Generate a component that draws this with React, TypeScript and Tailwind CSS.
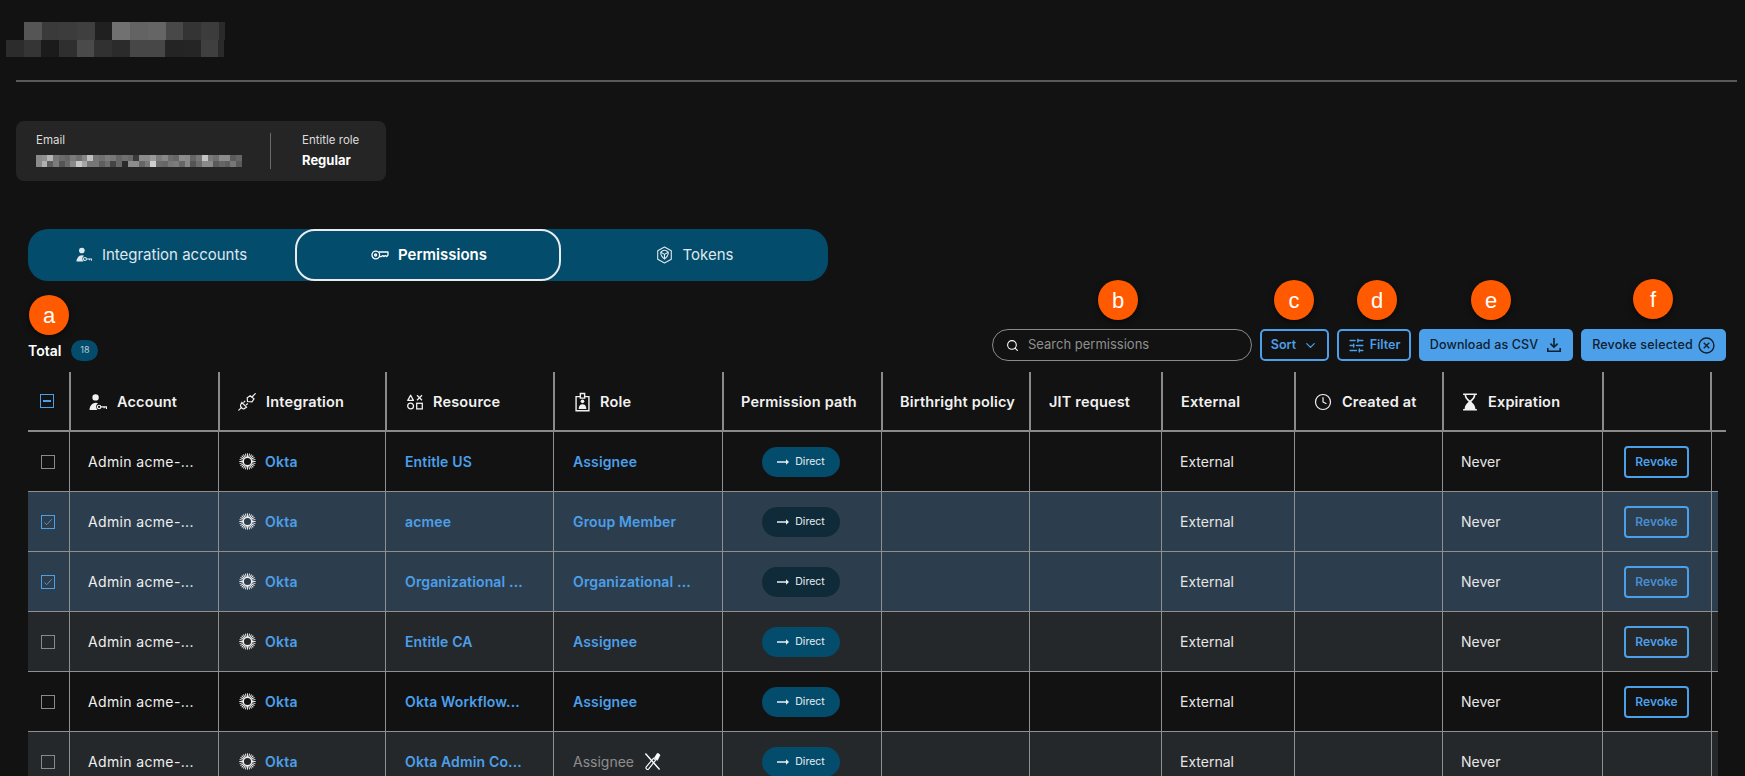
import { ChevronDown, Clock, Search, SlidersHorizontal } from "lucide-react";

const gridCols =
  "grid grid-cols-[41px_149px_167px_168px_169px_159px_148px_132px_133px_148px_160px_110px]";

const blurTop = ["#555", "#3a3a3a", "#3c3c3c", "#3f3f3f", "#202020", "#717171", "#636363", "#656565", "#484848", "#343434", "#3c3c3c"];
const blurBottom = ["#2c2c2c", "#353535", "#1b1b1b", "#2f2f2f", "#4a4a4a", "#313131", "#2b2b2b", "#474747", "#474747", "#242424", "#252525", "#3f3f3f"];
const emailTop = ["#8a8a8a", "#8f8f8f", "#b5b5b5", "#777", "#6c6c6c", "#666", "#7a7a7a", "#6e6e6e", "#858585", "#c0c0c0", "#777", "#707070", "#7c7c7c", "#777", "#666", "#707070", "#6a6a6a", "#3a3a3a", "#8c8c8c", "#8c8c8c", "#9a9a9a", "#7c7c7c", "#888", "#6d6d6d", "#666", "#8d8d8d", "#8a8a8a", "#666", "#777", "#c4c4c4", "#7a7a7a", "#707070", "#8c8c8c", "#8c8c8c", "#5c5c5c", "#666"];
const emailBottom = ["#8a8a8a", "#b0b0b0", "#5e5e5e", "#7c7c7c", "#555", "#6a6a6a", "#8a8a8a", "#c8c8c8", "#a5a5a5", "#777", "#777", "#5e5e5e", "#6e6e6e", "#444", "#666", "#2a2a2a", "#8c8c8c", "#8c8c8c", "#666", "#7a7a7a", "#cfcfcf", "#6a6a6a", "#666", "#777", "#7c7c7c", "#666", "#888", "#555", "#6c6c6c", "#8a8a8a", "#8a8a8a", "#5a5a5a", "#666", "#5e5e5e", "#777", "#5a5a5a"];

function AccountIcon({ className }: { className?: string }) {
  return (
    <svg viewBox="0 0 17 16" className={className} fill="currentColor">
      <circle cx="6.2" cy="3.2" r="3" />
      <path d="M0.5 15c0-3 2-6.8 6-6.8 .8 0 1.5 .2 2.1 .5-1.4 .8-2.2 2.5-1.7 4.2 .2 .7 .5 1.3 1 2.1z" />
      <circle cx="9.5" cy="12.2" r="1.6" fill="none" stroke="currentColor" strokeWidth="1.1" />
      <path d="M11 12.2h5.5v2M14.3 12.2v1.3" fill="none" stroke="currentColor" strokeWidth="1.1" />
    </svg>
  );
}

function KeyIcon({ className }: { className?: string }) {
  return (
    <svg viewBox="0 0 18 12" className={className} fill="none" stroke="currentColor" strokeWidth="1.3">
      <circle cx="4.8" cy="6" r="3.8" />
      <circle cx="4.6" cy="6" r="1" />
      <path d="M8 3h9v3l-1.4 1.6-1.3-1-1.3 1-1.2-1-1.3 1H8.2" strokeLinejoin="round" />
    </svg>
  );
}

function TokenIcon({ className }: { className?: string }) {
  return (
    <svg viewBox="0 0 17 18" className={className} fill="none" stroke="currentColor" strokeWidth="1.1" strokeLinejoin="round">
      <path d="M8.5 1l6.8 3.8v8.4L8.5 17l-6.8-3.8V4.8z" />
      <path d="M4.8 6.2c1.1-1.3 2.3-2 3.7-2s2.6 .7 3.7 2c.2 2.6-1.1 5-3.7 6.9-2.6-1.9-3.9-4.3-3.7-6.9z" />
      <path d="M4.8 6.2L8.5 8.4l3.7-2.2M8.5 8.4v4.7" />
    </svg>
  );
}

function PlugIcon({ className }: { className?: string }) {
  return (
    <svg viewBox="0 0 18 18" className={className} fill="none" stroke="currentColor" strokeWidth="1.2">
      <path d="M0.8 17.2l3-3M14 4l3.3-3.3" strokeLinecap="round" />
      <path d="M3.8 9.5l4.7 4.7-2.2 1.4c-1 .4-2.2 0-3-.9-.8-.8-1-1.8-.7-2.8z" />
      <path d="M5.5 9.6l1.7-1.7M8 12.2l1.7-1.7" />
      <path d="M9.5 8.5l-.3-3.8 3-2 3.8 3.2-2 3z" />
    </svg>
  );
}

function ShapesIcon({ className }: { className?: string }) {
  return (
    <svg viewBox="0 0 16 16" className={className} fill="none" stroke="currentColor" strokeWidth="1.3">
      <path d="M3.6 1.2L6.4 6.4H0.8z" strokeLinejoin="round" />
      <path d="M10 1.2l5 5M15 1.2l-5 5" />
      <circle cx="3.6" cy="12" r="2.9" />
      <rect x="9.7" y="9.3" width="5.6" height="5.6" />
    </svg>
  );
}

function RoleIcon({ className }: { className?: string }) {
  return (
    <svg viewBox="0 0 14 18" className={className} fill="none" stroke="currentColor" strokeWidth="1.3">
      <path d="M5 4H1v13.2h12V4H9" />
      <path d="M5 5.4V1h4v4.4z" />
      <circle cx="7" cy="8.4" r="1.7" fill="currentColor" stroke="none" />
      <path d="M3.4 15.6c0-2.6 1.4-4.4 3.6-4.4s3.6 1.8 3.6 4.4z" fill="currentColor" stroke="none" />
    </svg>
  );
}

function HourglassIcon({ className }: { className?: string }) {
  return (
    <svg viewBox="0 0 14 17" className={className} fill="currentColor">
      <path d="M0.5 0.5h13v1.4h-1.4c0 2.6-2 4.5-3.8 6.4 1.8 1.6 3.8 3.8 3.8 6.8h1.4v1.4H0.5v-1.4h1.4c0-3 2-5.2 3.8-6.8C3.9 6.4 1.9 4.5 1.9 1.9H0.5zM3.4 1.9c.1 2 1.8 3.6 3.6 5.3 1.8-1.7 3.5-3.3 3.6-5.3z" />
    </svg>
  );
}

function OktaIcon() {
  const rays = Array.from({ length: 24 }, (_, i) => i * 15);
  return (
    <svg viewBox="0 0 17 17" className="w-[17px] h-[17px] shrink-0 text-[#eeeeee]" stroke="currentColor" fill="none">
      {rays.map((deg) => (
        <line key={deg} x1="8.5" y1="0.3" x2="8.5" y2="4" strokeWidth="0.95" transform={`rotate(${deg} 8.5 8.5)`} />
      ))}
      <circle cx="8.5" cy="8.5" r="4.2" strokeWidth="1.3" />
    </svg>
  );
}

function ToolsOffIcon() {
  return (
    <svg viewBox="0 0 18 20" className="w-[17px] h-[19px] text-white" fill="none" stroke="currentColor">
      <path d="M1.5 1.5L16.5 18.5" strokeWidth="1.5" />
      <path d="M3 18.2c-1-.8-1.2-1.5-.8-2.2L10 6.5l2.4 2L5 17.8c-.6 .7-1.2 .9-2 .4z" strokeWidth="1.2" />
      <path d="M11 6.4L14 1.5c1-.4 2.4 .5 2.8 1.8l-2.6 5.4z" fill="currentColor" strokeWidth="0.8" />
    </svg>
  );
}

function DownloadIcon() {
  return (
    <svg viewBox="0 0 16 16" className="w-4 h-4" fill="none" stroke="currentColor" strokeWidth="1.6">
      <path d="M8 1v9M4.4 6.6L8 10.2l3.6-3.6" />
      <path d="M1.8 11v3.2h12.4V11" />
    </svg>
  );
}

function Marker({ letter, className }: { letter: string; className: string }) {
  return (
    <div
      className={`absolute w-10 h-10 rounded-full bg-[#ff5a00] text-white text-[22px] flex items-center justify-center shadow-[0_2px_6px_rgba(0,0,0,0.5)] font-['Liberation_Sans',sans-serif] ${className}`}
    >
      {letter}
    </div>
  );
}

function HeadCell({ icon, label, className = "pl-[18px]" }: { icon?: React.ReactNode; label: string; className?: string }) {
  return (
    <div className={`border-l-2 border-[#8a8a8a] pt-[2px] flex items-center gap-[10px] text-[14.5px] tracking-[0.012em] font-semibold text-[#f1f1f1] whitespace-nowrap ${className}`}>
      {icon}
      {label}
    </div>
  );
}

function Checkbox({ state }: { state: "off" | "on" }) {
  if (state === "on") {
    return (
      <div className="w-[14px] h-[14px] border border-[#4c9fe9] flex items-center justify-center">
        <svg viewBox="0 0 10 10" className="w-[10px] h-[10px] text-[#4c9fe9]" fill="none" stroke="currentColor" strokeWidth="0.9">
          <path d="M1.5 5.5l2.2 2.2 5-5.4" />
        </svg>
      </div>
    );
  }
  return <div className="w-[14px] h-[14px] border border-[#8a8a8a]" />;
}

type Row = {
  resource: string;
  role: string;
  bg: string;
  pill: string;
  selected?: boolean;
  noRevoke?: boolean;
  inherited?: boolean;
};

const rows: Row[] = [
  { resource: "Entitle US", role: "Assignee", bg: "bg-[#121212]", pill: "bg-[#044c6c]" },
  { resource: "acmee", role: "Group Member", bg: "bg-[#2c3e4e]", pill: "bg-[#0f2a38]", selected: true },
  { resource: "Organizational ...", role: "Organizational ...", bg: "bg-[#2c3e4e]", pill: "bg-[#0f2a38]", selected: true },
  { resource: "Entitle CA", role: "Assignee", bg: "bg-[#25282b]", pill: "bg-[#044c6c]" },
  { resource: "Okta Workflow...", role: "Assignee", bg: "bg-[#121212]", pill: "bg-[#044c6c]" },
  { resource: "Okta Admin Co...", role: "Assignee", bg: "bg-[#25282b]", pill: "bg-[#044c6c]", noRevoke: true, inherited: true },
];

const cellLine = "border-l border-[#8f8f8f]";

export default function App() {
  return (
    <div className="relative h-[776px] overflow-hidden bg-[#121212] text-white font-['Inter',sans-serif]">
      {/* blurred page title */}
      <div className="pl-[6px] pt-[22px] h-[80px]">
        <div className="flex h-[18px] pl-[18px]">
          {blurTop.map((c, i) => (
            <div key={i} className="w-[17.7px]" style={{ backgroundColor: c }} />
          ))}
          <div className="w-[6px] bg-[#2a2a2a]" />
        </div>
        <div className="flex h-[17px]">
          {blurBottom.map((c, i) => (
            <div key={i} className="w-[17.7px]" style={{ backgroundColor: c }} />
          ))}
          <div className="w-[6px] bg-[#2a2a2a]" />
        </div>
      </div>
      <div className="ml-4 mr-2 h-[2px] bg-[#5a5a5a]" />

      <div className="ml-4 mt-[39px] w-[370px] h-[60px] rounded-lg bg-[#252525] flex items-start pt-[11px]">
        <div className="w-[254px] pl-5 flex flex-col">
          <span className="text-[11.5px] text-[#dcdcdc] leading-[16px]">Email</span>
          <div className="w-[206px] mt-[7px]">
            <div className="flex h-[6px]">
              {emailTop.map((c, i) => (
                <div key={i} className="flex-1" style={{ backgroundColor: c }} />
              ))}
            </div>
            <div className="flex h-[6px]">
              {emailBottom.map((c, i) => (
                <div key={i} className="flex-1" style={{ backgroundColor: c }} />
              ))}
            </div>
          </div>
        </div>
        <div className="w-px h-9 mt-px bg-[#6a6a6a]" />
        <div className="pl-[31px] flex flex-col">
          <span className="text-[11.5px] text-[#dcdcdc] leading-[16px]">Entitle role</span>
          <span className="text-[13px] font-bold leading-[16px] mt-1">Regular</span>
        </div>
      </div>

      <div className="ml-7 mt-12 w-[800px] h-[52px] rounded-[20px] bg-[#044c6c] flex">
        <div className="w-[267px] flex items-center justify-center gap-[10px] text-[15px] text-[#dfe8ec]">
          <AccountIcon className="w-4 h-4" />
          Integration accounts
        </div>
        <div className="w-[266px] rounded-[20px] border-2 border-[#e9ecee] flex items-center justify-center gap-[9px] text-[15px] font-semibold pl-[2px]">
          <KeyIcon className="w-[18px] h-3" />
          Permissions
        </div>
        <div className="flex-1 flex items-center justify-center gap-[10px] text-[15px] text-[#dfe8ec]">
          <TokenIcon className="w-[17px] h-[18px]" />
          Tokens
        </div>
      </div>

      <div className="ml-7 mr-[19px] mt-12 h-[32px] flex items-center">
        <div className="flex items-center gap-[10px] mt-[10px]">
          <span className="text-[14px] font-semibold">Total</span>
          <span className="w-[27px] h-[21px] rounded-full bg-[#044c6c] text-[#b9cdd8] text-[9px] flex items-center justify-center">18</span>
        </div>
        <div className="ml-auto flex items-center gap-2">
          <div className="w-[260px] h-8 rounded-full border border-[#8a8a8a] flex items-center pl-[13px] gap-[9px] text-[13px] text-[#8f8f8f]">
            <Search className="w-[13px] h-[13px] text-white" strokeWidth={2} />
            Search permissions
          </div>
          <button className="w-[69px] h-8 rounded-[5px] border-2 border-[#4c9fe9] text-[#4c9fe9] text-[12.5px] font-semibold flex items-center justify-center gap-[7px]">
            Sort
            <ChevronDown className="w-[15px] h-[15px]" />
          </button>
          <button className="w-[74px] h-8 rounded-[5px] border-2 border-[#4c9fe9] text-[#4c9fe9] text-[12.5px] font-semibold flex items-center justify-center gap-[5px]">
            <SlidersHorizontal className="w-[17px] h-[17px]" />
            Filter
          </button>
          <button className="w-[154px] h-8 rounded-[5px] bg-[#4c9fe9] text-[#10202e] text-[12.5px] tracking-[0.01em] font-medium flex items-center justify-center gap-2">
            Download as CSV
            <DownloadIcon />
          </button>
          <button className="w-[145px] h-8 rounded-[5px] bg-[#4c9fe9] text-[#10202e] text-[12.5px] tracking-[0.015em] font-medium flex items-center justify-center gap-[5px]">
            Revoke selected
            <svg viewBox="0 0 16 16" className="w-[17px] h-[17px]" fill="none" stroke="currentColor" strokeWidth="1.3">
              <circle cx="8" cy="8" r="7" />
              <path d="M5.4 5.4l5.2 5.2M10.6 5.4l-5.2 5.2" />
            </svg>
          </button>
        </div>
      </div>

      <div className="ml-7 mt-[11px]">
        <div className={`${gridCols} w-[1698px] h-[60px] border-b-2 border-[#8a8a8a]`}>
          <div className="flex items-center pl-3">
            <div className="w-[14px] h-[14px] border border-[#4c9fe9] flex items-center justify-center">
              <div className="w-2 h-[2px] bg-[#4c9fe9]" />
            </div>
          </div>
          <HeadCell icon={<AccountIcon className="w-[18px] h-[17px]" />} label="Account" />
          <HeadCell icon={<PlugIcon className="w-[18px] h-[18px]" />} label="Integration" className="pl-[18px] gap-[9px]" />
          <HeadCell icon={<ShapesIcon className="w-4 h-4 ml-[2px]" />} label="Resource" />
          <HeadCell icon={<RoleIcon className="w-[15px] h-[20px] ml-[2px]" />} label="Role" />
          <HeadCell label="Permission path" className="justify-center pr-[7px]" />
          <HeadCell label="Birthright policy" className="justify-center pl-[3px]" />
          <HeadCell label="JIT request" />
          <HeadCell label="External" />
          <HeadCell icon={<Clock className="w-[18px] h-[18px]" strokeWidth={1.6} />} label="Created at" />
          <HeadCell icon={<HourglassIcon className="w-4 h-[18px]" />} label="Expiration" />
          <div className="border-l-2 border-r-2 border-[#8a8a8a]" />
        </div>

        {rows.map((row, i) => (
          <div key={i} className={`${gridCols} ${row.bg} w-[1690px] h-[60px] border-b border-[#8f8f8f]`}>
            <div className="flex items-center pl-[13px]">
              <Checkbox state={row.selected ? "on" : "off"} />
            </div>
            <div className={`${cellLine} flex items-center pl-[18px] text-[14px] tracking-[0.025em] text-[#f0f0f0] whitespace-nowrap`}>Admin acme-...</div>
            <div className={`${cellLine} flex items-center pl-5 gap-[9px] text-[14px] tracking-[0.02em] font-semibold text-[#4c9fe9]`}>
              <OktaIcon />
              Okta
            </div>
            <div className={`${cellLine} flex items-center pl-[19px] text-[14px] tracking-[0.01em] font-semibold text-[#4c9fe9] whitespace-nowrap`}>{row.resource}</div>
            {row.inherited ? (
              <div className={`${cellLine} flex items-center pl-[19px] gap-[10px] text-[14px] text-[#8e8e8e]`}>
                {row.role}
                <ToolsOffIcon />
              </div>
            ) : (
              <div className={`${cellLine} flex items-center pl-[19px] text-[14px] tracking-[0.01em] font-semibold text-[#4c9fe9] whitespace-nowrap`}>{row.role}</div>
            )}
            <div className={`${cellLine} flex items-center justify-center pr-[2px]`}>
              <div className={`${row.pill} w-[78px] h-[30px] rounded-full flex items-center justify-center gap-[6px] text-[10.5px] text-[#e8eef1]`}>
                <svg viewBox="0 0 12 8" className="w-3 h-2" fill="currentColor">
                  <path d="M0 3.3h9V1.2L12 4 9 6.8V4.7H0z" />
                </svg>
                Direct
              </div>
            </div>
            <div className={cellLine} />
            <div className={cellLine} />
            <div className={`${cellLine} flex items-center pl-[18px] text-[14px] text-[#e6e6e6]`}>External</div>
            <div className={cellLine} />
            <div className={`${cellLine} flex items-center pl-[18px] text-[14px] text-[#e6e6e6]`}>Never</div>
            <div className={`${cellLine} border-r flex items-center pl-[21px]`}>
              {!row.noRevoke && (
                <button className={`w-[65px] h-8 rounded-[4px] border-2 border-[#4c9fe9] text-[12px] font-semibold ${row.selected ? "text-[#4c9fe9]/85" : "text-[#4c9fe9]"}`}>
                  Revoke
                </button>
              )}
            </div>
          </div>
        ))}
      </div>

      <Marker letter="a" className="left-[29px] top-[295px]" />
      <Marker letter="b" className="left-[1098px] top-[280px]" />
      <Marker letter="c" className="left-[1274px] top-[280px]" />
      <Marker letter="d" className="left-[1357px] top-[280px]" />
      <Marker letter="e" className="left-[1471px] top-[280px]" />
      <Marker letter="f" className="left-[1633px] top-[279px]" />
    </div>
  );
}
